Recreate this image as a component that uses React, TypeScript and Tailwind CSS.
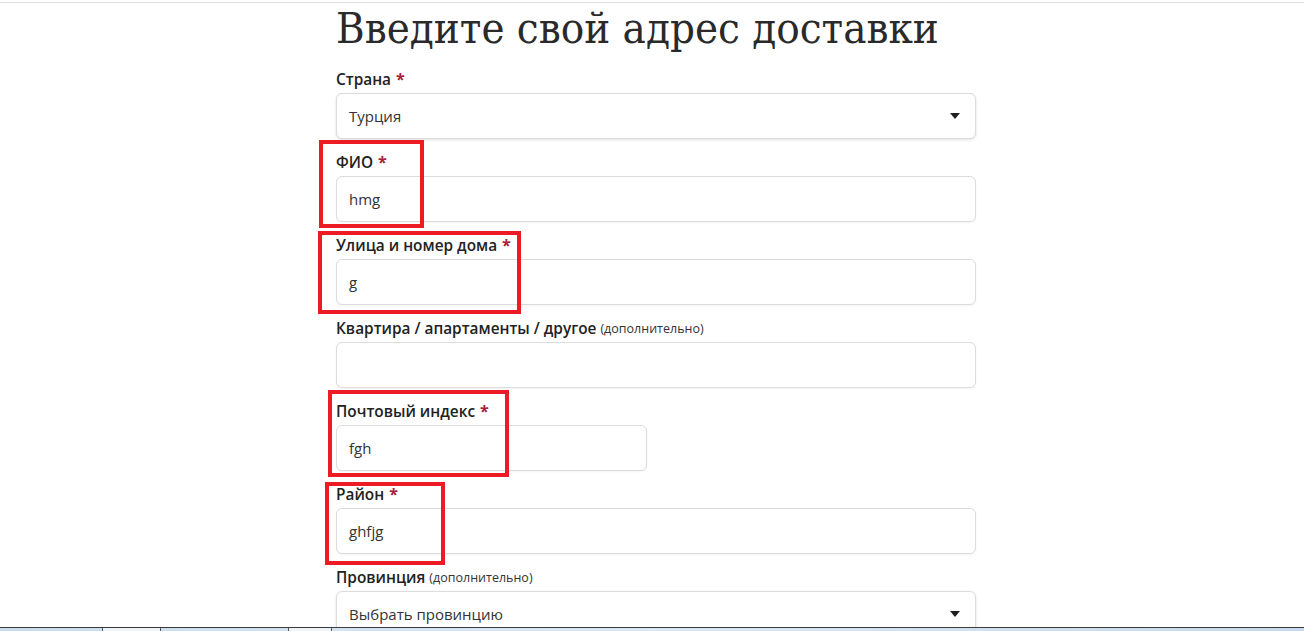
import React from "react";

type Field = {
  label: string;
  value?: string;
  required?: boolean;
  optional?: boolean;
  select?: boolean;
  narrow?: boolean;
};

const fields: Field[] = [
  { label: "Страна", value: "Турция", required: true, select: true },
  { label: "ФИО", value: "hmg", required: true },
  { label: "Улица и номер дома", value: "g", required: true },
  { label: "Квартира / апартаменты / другое", optional: true },
  { label: "Почтовый индекс", value: "fgh", required: true, narrow: true },
  { label: "Район", value: "ghfjg", required: true },
  { label: "Провинция", value: "Выбрать провинцию", optional: true, select: true },
];

// red annotation boxes drawn over the form
const marks = [
  { id: "m1", cls: "left-[319px] top-[140px] w-[105px] h-[88px]" },
  { id: "m2", cls: "left-[318px] top-[231px] w-[203px] h-[83px]" },
  { id: "m3", cls: "left-[328px] top-[390px] w-[181px] h-[87px]" },
  { id: "m4", cls: "left-[325px] top-[482px] w-[120px] h-[83px]" },
];

const Caret = () => (
  <svg width="10" height="6" viewBox="0 0 10 6" className="shrink-0">
    <path d="M0 0h10L5 6z" fill="#1f1f1f" />
  </svg>
);

function FormField({ f }: { f: Field }) {
  return (
    <div className="flex flex-col mb-[14px]">
      <label className="h-[20px] leading-[20px] text-[15.4px] font-semibold text-[#222] mb-[3px] flex items-center">
        {f.label}
        {f.required && <span className="ml-[5px] text-[#a3213b] font-bold text-[16px] -mt-[2px]">*</span>}
        {f.optional && <span className="ml-[4px] text-[12.5px] font-normal text-[#333]">(дополнительно)</span>}
      </label>
      <div
        className={`h-[46px] rounded-[6px] border border-[#dcdcdc] bg-white flex items-center justify-between px-[12px] text-[15px] text-[#333] ${
          f.select ? "shadow-[0_1px_3px_rgba(0,0,0,0.12)]" : "shadow-[0_1px_2px_rgba(0,0,0,0.05)]"
        } ${f.narrow ? "w-[311px]" : "w-full"}`}
      >
        <span>{f.value}</span>
        {f.select && <span className="mr-[3px]"><Caret /></span>}
      </div>
    </div>
  );
}

export default function App() {
  return (
    <div className="h-[631px] w-[1304px] bg-white flex flex-col overflow-hidden relative font-['Open_Sans',sans-serif]">
      <div className="h-[2px]" />
      <div className="h-px bg-[#dedede]" />
      <div className="flex-1 overflow-hidden flex justify-center">
        <div className="w-[640px] ml-[8px]">
          <h1 className="font-['DejaVu_Serif',serif] font-stretch-condensed font-light text-[43.4px] leading-[56px] text-[#2a2a2a] -mt-[3px] mb-[14px] whitespace-nowrap">
            Введите свой адрес доставки
          </h1>
          {fields.map((f) => (
            <FormField key={f.label} f={f} />
          ))}
        </div>
      </div>
      <div className="h-px bg-[#3c3c3c]" />
      <div className="h-[3px] bg-gradient-to-r from-[#c9dcee] via-[#dbe8f5] to-[#c7d9ec] flex">
        <div className="w-[103px] border-r border-[#555]" />
        <div className="w-[58px] border-r border-[#555] bg-[#eef3f8]" />
        <div className="w-[128px] border-r border-[#555]" />
        <div className="w-[43px] border-r border-[#555] bg-[#eef3f8]" />
      </div>
      {marks.map((m) => (
        <div key={m.id} className={`absolute border-[4px] border-[#ed1c24] pointer-events-none ${m.cls}`} />
      ))}
    </div>
  );
}
